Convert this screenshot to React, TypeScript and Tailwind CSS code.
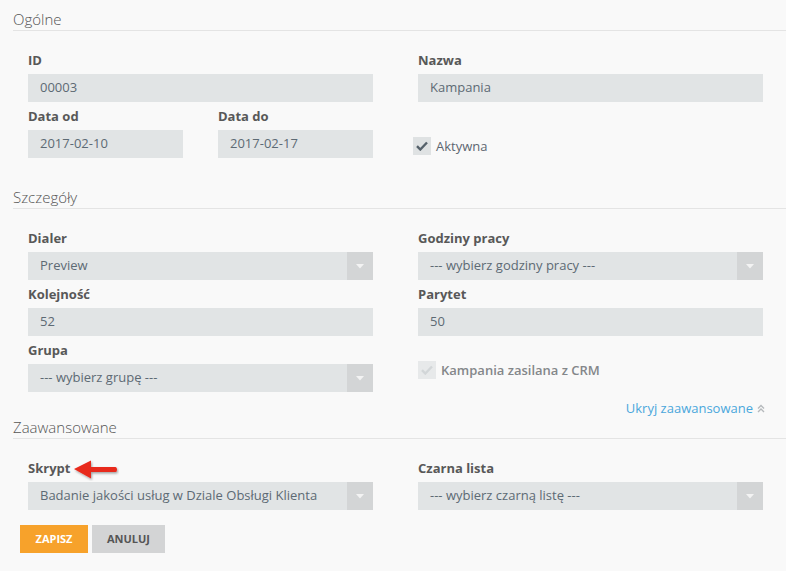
import React from "react";

const inputCls =
  "h-[28px] w-full bg-[#e1e4e5] pl-3 flex items-center text-[13px] text-[#5d6a74]";

function SectionHeader({ title, className }: { title: string; className?: string }) {
  return (
    <div
      className={
        "border-b border-[#e4e4e4] text-[15px] font-light leading-[21px] text-[#555] " +
        (className || "")
      }
    >
      {title}
    </div>
  );
}

function Label({ children }: { children: React.ReactNode }) {
  return <div className="mb-[5px] text-[13px] font-bold leading-[18px] text-[#585858]">{children}</div>;
}

function Field({ label, value }: { label: string; value: string }) {
  return (
    <div className="mb-[5px]">
      <Label>{label}</Label>
      <div className={inputCls}>{value}</div>
    </div>
  );
}

function Caret() {
  return (
    <svg width="8" height="5" viewBox="0 0 8 5">
      <path d="M0 0h8L4 4.5z" fill="#f3f3f3" />
    </svg>
  );
}

function SelectField({ label, value }: { label: React.ReactNode; value: string }) {
  return (
    <div className="mb-[5px]">
      <Label>{label}</Label>
      <div className="flex h-[28px] w-full bg-[#e1e4e5] text-[13px] text-[#5d6a74]">
        <div className="flex flex-1 items-center pl-3">{value}</div>
        <div className="flex w-[26px] items-center justify-center bg-[#d3d5d6]">
          <Caret />
        </div>
      </div>
    </div>
  );
}

function Check({ disabled }: { disabled?: boolean }) {
  return (
    <div
      className={
        "flex h-[18px] w-[18px] items-center justify-center " +
        (disabled ? "bg-[#e7e9ea]" : "bg-[#dfe2e3]")
      }
    >
      <svg width="12" height="10" viewBox="0 0 12 10">
        <path
          d="M1 5.2l3.3 3.3L11 1.5"
          fill="none"
          stroke={disabled ? "#d2d6d8" : "#56626b"}
          strokeWidth="2.4"
        />
      </svg>
    </div>
  );
}

function RedArrow() {
  return (
    <svg
      className="absolute left-[45px] top-[0px]"
      width="46"
      height="22"
      viewBox="0 0 46 22"
    >
      <defs>
        <filter id="sh" x="-20%" y="-40%" width="150%" height="200%">
          <feDropShadow dx="1" dy="1.5" stdDeviation="1" floodColor="#000" floodOpacity="0.35" />
        </filter>
      </defs>
      <path
        d="M1 10L18 1.5V8H42.5Q44 8 44 10.5Q44 13 42.5 13H18v6.5z"
        fill="#e8291c"
        filter="url(#sh)"
      />
    </svg>
  );
}

export default function App() {
  return (
    <div className="min-h-screen bg-[#f9f9f9] pl-[13px] font-['Open_Sans',sans-serif]">
      {/* Ogólne */}
      <SectionHeader title="Ogólne" className="pt-[9px]" />
      <div className="grid grid-cols-2 gap-x-[45px] pb-[4px] pl-[15px] pr-[23px] pt-[20px]">
        <Field label="ID" value="00003" />
        <Field label="Nazwa" value="Kampania" />
        <div className="grid grid-cols-2 gap-x-[35px]">
          <Field label="Data od" value="2017-02-10" />
          <Field label="Data do" value="2017-02-17" />
        </div>
        <div className="-ml-[5px] flex items-start gap-[5px] pt-[30px]">
          <Check />
          <span className="text-[13px] leading-[18px] text-[#5d6670]">Aktywna</span>
        </div>
      </div>

      {/* Szczegóły */}
      <SectionHeader title="Szczegóły" className="mt-[20px]" />
      <div className="grid grid-cols-2 gap-x-[45px] pl-[15px] pr-[23px] pt-[20px]">
        <SelectField label="Dialer" value="Preview" />
        <SelectField label="Godziny pracy" value="--- wybierz godziny pracy ---" />
        <Field label="Kolejność" value="52" />
        <Field label="Parytet" value="50" />
        <SelectField label="Grupa" value="--- wybierz grupę ---" />
        <div className="flex items-start gap-[5px] pt-[20px]">
          <Check disabled />
          <span className="text-[13px] font-semibold leading-[18px] text-[#84878a]">
            Kampania zasilana z CRM
          </span>
        </div>
      </div>
      <div className="mt-[2px] flex justify-end pr-[21px] text-[13px] leading-[18px] text-[#4aa7dc]">
        <span>Ukryj zaawansowane</span>
        <svg className="ml-[4px] mt-[5px]" width="8" height="9" viewBox="0 0 8 9">
          <path d="M1 4.5L4 1.5l3 3M1 8L4 5l3 3" fill="none" stroke="#b5b9bc" strokeWidth="1.4" />
        </svg>
      </div>

      {/* Zaawansowane */}
      <SectionHeader title="Zaawansowane" />
      <div className="grid grid-cols-2 gap-x-[45px] pl-[15px] pr-[23px] pt-[20px]">
        <SelectField
          label={
            <span className="relative inline-block">
              Skrypt
              <RedArrow />
            </span>
          }
          value="Badanie jakości usług w Dziale Obsługi Klienta"
        />
        <SelectField label="Czarna lista" value="--- wybierz czarną listę ---" />
      </div>
      <div className="ml-[7px] mt-[10px] flex gap-[4px]">
        <button className="h-[28px] w-[68px] bg-[#f7a22b] text-[11px] font-bold text-white">
          ZAPISZ
        </button>
        <button className="h-[28px] w-[73px] bg-[#d3d4d5] text-[11px] font-bold text-[#555]">
          ANULUJ
        </button>
      </div>
    </div>
  );
}
